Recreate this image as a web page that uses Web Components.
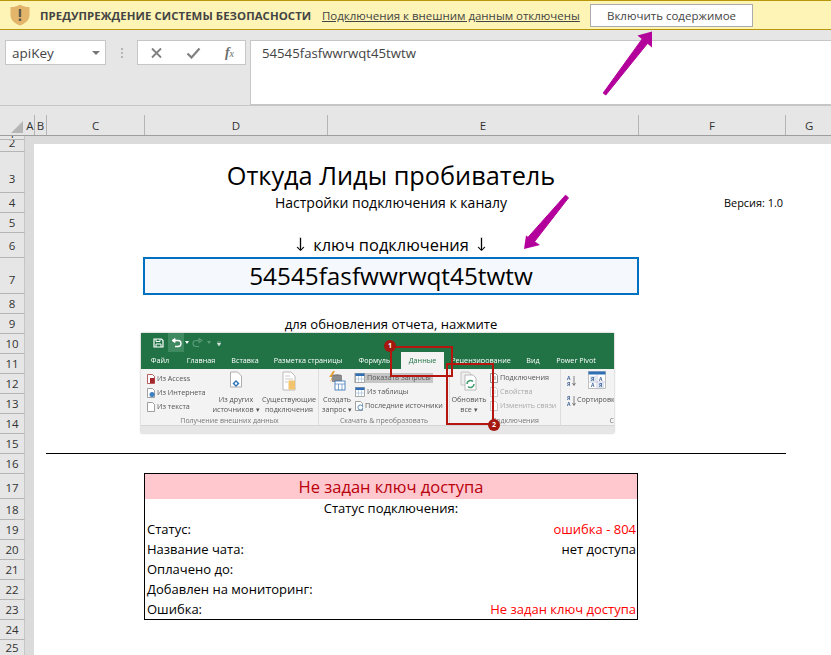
<!DOCTYPE html>
<html lang="ru">
<head>
<meta charset="utf-8">
<title>Откуда Лиды пробиватель</title>
<style>
html,body{margin:0;padding:0;background:#fff;overflow:hidden}
body{font-family:"Open Sans","Noto Sans",sans-serif}
.arr{font-family:"DejaVu Sans",sans-serif;font-size:18.500px;-webkit-text-stroke:.35px #fff;opacity:.99;display:inline-block}
</style>
</head>
<body>
<excel-app>
  <warning-bar></warning-bar>
  <formula-bar name="apiKey" value="54545fasfwwrwqt45twtw"></formula-bar>
  <column-headers></column-headers>
  <sheet-view>
    <sheet-cell style="grid-column:5/7;grid-row:4;font-size:25.300px;padding-top:6px" align="center">Откуда Лиды пробиватель</sheet-cell>
    <sheet-cell style="grid-column:5/7;grid-row:5;font-size:14px" align="center">Настройки подключения к каналу</sheet-cell>
    <sheet-cell style="grid-column:7/8;grid-row:5;font-size:10.900px;padding-right:3px" align="right">Версия: 1.0</sheet-cell>
    <sheet-cell style="grid-column:5/7;grid-row:7;font-size:16.400px;gap:5px" align="center"><span class="arr">↓</span><span>ключ подключения</span><span class="arr">↓</span></sheet-cell>
    <sheet-cell style="grid-column:5/7;grid-row:8;font-size:24.300px;background:#f5f8fc;border:2px solid #0070c0;margin:-1px -1px -1px -1px" align="center">54545fasfwwrwqt45twtw</sheet-cell>
    <sheet-cell style="grid-column:5/7;grid-row:10;font-size:13.050px;padding-top:2px" align="center">для обновления отчета, нажмите</sheet-cell>
    <ribbon-picture style="grid-column:5/7;grid-row:11/16"></ribbon-picture>
    <sheet-cell style="grid-column:4/8;grid-row:16;border-bottom:1px solid #000;margin-left:-1px"></sheet-cell>
    <status-table style="grid-column:5/7;grid-row:18/25"></status-table>
  </sheet-view>
</excel-app>

<script>
function def(name, css, html){
  customElements.define(name, class extends HTMLElement{
    constructor(){
      super();
      const r=this.attachShadow({mode:'open'});
      r.innerHTML='<style>'+css+'</style>'+(typeof html==='function'?html(this):html);
    }
  });
}

def('excel-app',`:host{display:flex;flex-direction:column;width:831px;height:655px;overflow:hidden;color:#000;position:relative}`,`<slot></slot>`);

def('warning-bar',`
:host{display:flex;align-items:center;height:28px;flex:none;background:#fdf4b5;border-top:1px solid #b8960c;border-bottom:1px solid #b8960c;color:#444;font-size:11.3px;white-space:nowrap}
svg{margin-left:10px;flex:none}
b{margin-left:10px;font-weight:700;width:272px;letter-spacing:.06px;font-size:11.4px}
u{margin-left:10px;width:268px;font-size:11.5px;letter-spacing:-.02px}
button{width:163px;height:23px;box-sizing:border-box;background:#fff;border:1px solid #ababab;font:inherit;font-size:11.5px;color:#444;padding:0}
`,`<svg width="20" height="22" viewBox="0 0 20 22"><path d="M10 .5C7 2.5 4 3 .5 3v8c0 5 4 8.500 9.500 10.500C15.500 19.500 19.500 16 19.500 11V3C16 3 13 2.500 10 .5z" fill="#e2b56b"/><rect x="8.800" y="5" width="2.400" height="8" fill="#5d5a4d"/><rect x="8.800" y="14.500" width="2.400" height="2.500" fill="#5d5a4d"/></svg><b>ПРЕДУПРЕЖДЕНИЕ СИСТЕМЫ БЕЗОПАСНОСТИ</b><u>Подключения к внешним данным отключены</u><button>Включить содержимое</button>
<svg style="position:absolute;left:0;top:0;margin:0;overflow:visible;pointer-events:none" width="831" height="100"><path d="M603.200 93L642.200 38.900L647.800 43.100L605.800 95z" fill="#b3009b" stroke="#b3009b" stroke-linejoin="round"/><path d="M652 31.500L637.500 35.500L652 47.500z" fill="#b3009b"/></svg>`);

def('formula-bar',`
:host{display:flex;align-items:flex-start;height:76px;flex:none;background:#e6e6e6;box-sizing:border-box;padding:10px 0 0 5px;border-bottom:1px solid #c6c6c6;font-size:13.500px;color:#444;white-space:nowrap}
.box{background:#fff;border:1px solid #c6c6c6;box-sizing:border-box}
.name{width:101px;height:25px;display:flex;align-items:center;padding:0 5px 0 6px;justify-content:space-between}
.car{width:0;height:0;border:4px solid transparent;border-top:4px solid #777;border-bottom:0}
.dots{width:31px;display:flex;flex-direction:column;align-items:center;gap:2px;padding-top:8px;box-sizing:border-box}
.dots i{width:2px;height:2px;background:#b5b5b5}
.btns{width:109px;height:25px;display:flex;align-items:center;justify-content:space-between;padding:0 11px 0 12px}
.fx{font:italic 700 14px "Liberation Serif",serif;color:#6e6e6e}
.fx small{font-size:10px;font-weight:400}
.input{margin-left:4px;flex:1;height:65px;border-right:0;padding:3px 0 0 11px;line-height:18px;font-size:13.200px}
`,el=>`<div class="box name"><span>${el.getAttribute('name')}</span><i class="car"></i></div><div class="dots"><i></i><i></i><i></i></div>
<div class="box btns"><svg width="13" height="12" viewBox="0 0 13 12"><path d="M2 1.500l9 9M11 1.500l-9 9" stroke="#808080" stroke-width="1.800" fill="none"/></svg><svg width="15" height="12" viewBox="0 0 15 12"><path d="M1.500 6.500L5.500 10.500L13.500 1.500" stroke="#808080" stroke-width="2.200" fill="none"/></svg><span class="fx">f<small>x</small></span></div>
<div class="box input">${el.getAttribute('value')}</div>`);

def('column-headers',`
:host{display:grid;grid-template-columns:26px 9px 12px 98px 183px 311px 147px 1fr;height:30px;flex:none;background:#e6e6e6;box-sizing:border-box;border-bottom:1px solid #9e9e9e;padding-top:9px;font-size:11.500px;color:#333}
div{display:flex;align-items:center;justify-content:center;border-right:1px solid #b5b5b5;box-sizing:border-box;overflow:hidden}
div:last-child{border:0;justify-content:flex-start;padding-left:19px}
.c{border:0;align-items:flex-end;justify-content:flex-end;padding:0 3px 2px 0;position:relative}
`,`<div class="c"><svg width="12" height="12" viewBox="0 0 12 12"><path d="M12 0V12H0z" fill="#b5b5b5"/></svg></div><div>A</div><div>B</div><div>C</div><div>D</div><div>E</div><div>F</div><div>G</div>`);

/* height, label, label offset (padding-top) */
const ROWS=[[4,'1',0],[4,'',0],[8,'',0],[41,'3',14],[20,'4',1],[20,'5',1],[25,'6',1],[36,'7',8],[20,'8',1],[20,'9',1],[20,'10',1],[20,'11',1],[20,'12',1],[20,'13',1],[20,'14',1],[20,'15',1],[20,'16',1],[25,'17',3],[21,'18',1],[20,'19',1],[20,'20',1],[20,'21',1],[20,'22',1],[20,'23',1],[20,'24',1],[16,'25',1]];

def('sheet-view',`
:host{display:grid;flex:none;grid-template-columns:25px 9px 13px 97px 183px 311px 148px 45px;grid-template-rows:${ROWS.map(r=>r[0]+'px').join(' ')};background:#fff;position:relative}
.rh{grid-column:1;background:#e6e6e6;border-bottom:1px solid #b5b5b5;border-right:1px solid #c6c6c6;box-sizing:border-box;font-size:11.500px;color:#333;display:flex;align-items:center;justify-content:center;overflow:hidden;line-height:1}
.rh.one{align-items:flex-end}
.rh.two{align-items:flex-start}
.rh.two span{margin-top:-3px}
.band{background:#dbdbdb}
svg{position:absolute;left:0;top:-136px;pointer-events:none;z-index:3;overflow:visible}
`,`${ROWS.map((r,i)=>r[1]?`<div class="rh${i==0?' one':''}" style="grid-row:${i+1};padding-top:${r[2]}px"><span>${r[1]}</span></div>`:'').join('')}
<div class="rh two" style="grid-row:2/4"><span>2</span></div>
<div class="band" style="grid-column:2;grid-row:1/${ROWS.length+1}"></div>
<div class="band" style="grid-column:3/9;grid-row:1/3"></div>
<slot></slot>
<svg width="831" height="655"><path d="M568.500 197.800L533 243.600L527 238.400L565.500 195.200z" fill="#b3009b" stroke="#b3009b" stroke-linejoin="round"/><path d="M524 249L526 235.500L540 245z" fill="#b3009b"/></svg>`);

def('sheet-cell',`
:host{display:flex;align-items:center;box-sizing:border-box;white-space:nowrap;min-width:0;color:#000;line-height:1}
:host([align=center]){justify-content:center}
:host([align=right]){justify-content:flex-end}
`,`<slot></slot>`);

def('status-table',`
:host{display:grid;grid-template-rows:25px 20px repeat(5,20px);border:1px solid #000;box-sizing:border-box;font-size:13px;color:#000;margin:-1px 0 0;height:147px;white-space:nowrap;line-height:1}
.h{background:#ffc7ce;color:#b8000c;font-size:16.500px;display:flex;align-items:center;justify-content:center;padding-top:1px;box-sizing:border-box}
.s{display:flex;align-items:center;justify-content:center;padding-bottom:1px}
.r{display:flex;align-items:center;justify-content:space-between;padding:0 1px 0 2px}
.red{color:#f00}
`,`<div class="h">Не задан ключ доступа</div><div class="s">Статус подключения:</div>
<div class="r"><span>Статус:</span><span class="red">ошибка - 804</span></div>
<div class="r"><span>Название чата:</span><span>нет доступа</span></div>
<div class="r"><span>Оплачено до:</span></div>
<div class="r"><span>Добавлен на мониторинг:</span></div>
<div class="r"><span>Ошибка:</span><span class="red">Не задан ключ доступа</span></div>`);

const ic={
 doc:(c='#888',x='')=>`<svg width="8" height="10" viewBox="0 0 8 10"><path d="M.5.500h5l2 2v7h-7z" fill="#fff" stroke="${c}" stroke-width=".8"/>${x}</svg>`,
 tbl:(c='#2f6fb5')=>`<svg width="10" height="10" viewBox="0 0 10 10"><rect x=".5" y=".5" width="9" height="9" fill="#fff" stroke="#888" stroke-width=".7"/><rect x=".5" y=".5" width="9" height="2.500" fill="${c}"/><path d="M3.500 3v6.500M6.500 3v6.500M.5 6h9" stroke="#9cb8d6" stroke-width=".6"/></svg>`
};
function small(icon,t,cls=''){return `<div class="sm ${cls}">${icon}<span>${t}</span></div>`}
function large(icon,l1,l2,w,st=''){return `<div class="lg" style="width:${w}px;${st}">${icon}<span>${l1}</span><span>${l2}</span></div>`}

def('ribbon-picture',`
:host{display:block;position:relative;width:473px;height:100px;margin:-1px 0 0 -3px;font-size:7.200px;color:#555;background:#f3f3f3;box-shadow:0 0 2px #aaa;white-space:nowrap;line-height:1}
.pic{width:100%;height:100%;display:flex;flex-direction:column;filter:blur(.3px);overflow:hidden}
.title{height:19px;background:#217346;display:flex;align-items:center;flex:none;position:relative}
.undo{position:absolute;left:27px;top:0;width:16px;height:19px;background:#3f8a61}
.title svg{position:absolute;top:5px}
.tabs{height:17px;background:#217346;display:flex;color:#fff;flex:none}
.tabs div{display:flex;align-items:center;justify-content:center;flex:none}
.tabs .on{background:#f3f3f3;color:#217346}
.body{height:56px;display:flex;flex:none;background:#f3f3f3}
.g{display:flex;flex-direction:column;border-right:1px solid #ddd;box-sizing:border-box;flex:none;height:100%;overflow:hidden}
.gc{height:47px;display:flex;padding-top:2px;flex:none;box-sizing:border-box}
.gl{text-align:center;font-size:7px;color:#777;padding-top:1px}
.col{display:flex;flex-direction:column;gap:4px;padding-top:3px}
.sm{display:flex;align-items:center;gap:2px;height:10px}
.dis{color:#aaa}
.hl{background:#c6c6c6;margin-left:-1px;padding-left:1px;width:78px}
.lg{display:flex;flex-direction:column;align-items:center;flex:none;text-align:center;line-height:10px;font-size:7.200px}
.lg svg{height:20px;margin-bottom:3px;flex:none}
.foot{flex:1;background:#e6e6e6;border-top:1px solid #d5d5d5}
.box{position:absolute;border:2.500px solid #b5170f;box-sizing:border-box}
.dot{position:absolute;width:12px;height:12px;border-radius:50%;background:#a5180f;color:#fff;font:700 7px/12px "Open Sans",sans-serif;text-align:center}
svg text{font:700 5px "Open Sans",sans-serif;fill:#3d5f94}
`,`<div class="pic">
<div class="title"><div class="undo"></div>
<svg style="left:12px" width="11" height="10" viewBox="0 0 11 10"><path d="M1 1h7.500L10 2.500V9H1z" fill="none" stroke="#fff" stroke-width="1.200"/><path d="M3 1v2.500h4V1M3 9V6h5v3" fill="none" stroke="#fff"/></svg>
<svg style="left:30px" width="12" height="10" viewBox="0 0 12 10"><path d="M1 2.500L4 .5v4z" fill="#fff" stroke="#fff"/><path d="M3.500 2.500H7a2.500 2.500 0 0 1 0 6H4" fill="none" stroke="#fff" stroke-width="1.300"/></svg>
<svg style="left:44px;top:8px" width="4" height="3"><path d="M0 0h4L2 3z" fill="#fff"/></svg>
<svg style="left:50px" width="12" height="10" viewBox="0 0 12 10"><path d="M11 2.500L8 .5v4zM8.500 2.500H5a2.500 2.500 0 0 0 0 6h3" fill="none" stroke="#5c9c7a" stroke-width="1.100"/></svg>
<svg style="left:66px;top:8px" width="4" height="3"><path d="M0 0h4L2 3z" fill="#5c9c7a"/></svg>
<svg style="left:76px;top:8px" width="4" height="5"><path d="M0 0h4M0 2h4L2 5z" fill="#cfe3d8" stroke="#cfe3d8" stroke-width=".5"/></svg>
</div>
<div class="tabs"><div style="width:38px">Файл</div><div style="width:44px">Главная</div><div style="width:44px">Вставка</div><div style="width:82px">Разметка страницы</div><div style="width:52px">Формулы</div><div class="on" style="width:43px">Данные</div><div style="width:74px">Рецензирование</div><div style="width:30px">Вид</div><div style="width:56px">Power Pivot</div></div>
<div class="body">
 <div class="g" style="width:178px"><div class="gc"><div class="col" style="width:70px;padding-left:6px;box-sizing:border-box">
  ${small(ic.doc('#a33','<rect x="3" y="4" width="4.500" height="5" fill="#a4262c"/>'),'Из Access')}
  ${small(ic.doc('#888','<circle cx="5" cy="6.500" r="2.500" fill="#3d7fc1"/>'),'Из Интернета')}
  ${small(ic.doc(),'Из текста')}
  </div>
  ${large(`<svg width="16" height="20" viewBox="0 0 16 20"><path d="M2.500 1h7l4 4v11h-11z" fill="#fff" stroke="#999" stroke-width=".8"/><path d="M8 9l3.500 3.500L8 16l-3.500-3.500z" fill="#2e75b6"/><circle cx="8" cy="12.500" r="1.200" fill="#fff"/></svg>`,'Из других','источников ▾',50)}
  ${large(`<svg width="16" height="20" viewBox="0 0 16 20"><path d="M2 1h8l4 4v14H2z" fill="#fff" stroke="#aaa" stroke-width=".8"/><path d="M4 5h5M4 8h8M4 11h3" stroke="#bbb" stroke-width=".8"/><rect x="7.500" y="9.500" width="6.500" height="9" fill="#f2c46d"/></svg>`,'Существующие','подключения',56)}
  </div><div class="gl">Получение внешних данных</div></div>
 <div class="g" style="width:131px"><div class="gc">
  ${large(`<svg width="18" height="20" viewBox="0 0 18 20"><path d="M5 0L1 6h3L2 11l6-7H5l2-4z" fill="#e8a33d"/><ellipse cx="9" cy="5" rx="5" ry="1.800" fill="#7d7d7d"/><rect x="4" y="5" width="10" height="6" fill="#8c8c8c"/><rect x="7" y="10" width="10" height="9" fill="#fff" stroke="#2f6fb5" stroke-width=".8"/><path d="M7 13h10M10.500 13v6M14 13v6" stroke="#2f6fb5" stroke-width=".6"/></svg>`,'Создать','запрос ▾',36)}
  <div class="col" style="padding-top:2px">${small(ic.tbl(),'Показать запросы','hl')}${small(ic.tbl(),'Из таблицы')}${small(ic.doc('#888','<circle cx="5.500" cy="6.500" r="2.500" fill="#fff" stroke="#2e75b6" stroke-width=".8"/>'),'Последние источники')}</div>
  </div><div class="gl">Скачать &amp; преобразовать</div></div>
 <div class="g" style="width:111px"><div class="gc">
  ${large(`<svg width="20" height="20" viewBox="0 0 20 20"><path d="M2 1h8l2 2v11H2z" fill="#eee" stroke="#bbb" stroke-width=".8"/><path d="M6 4h8l3 3v12H6z" fill="#fff" stroke="#aaa" stroke-width=".8"/><path d="M8 13a3.500 3.500 0 0 1 6-2.500M15 13a3.500 3.500 0 0 1-6 2.500" fill="none" stroke="#3e9c6b" stroke-width="1.500"/></svg>`,'Обновить','все ▾',38,'margin:0 2px 0 0')}
  <div class="col" style="padding-top:2px;gap:4px">${small(ic.doc('#777','<path d="M2 4h4M2 6h4" stroke="#777" stroke-width=".7"/>'),'Подключения')}${small(ic.doc('#bbb','<path d="M2 4h4M2 6h4" stroke="#bbb" stroke-width=".7"/>'),'Свойства','dis')}${small(ic.doc('#bbb'),'Изменить связи','dis')}</div>
  </div><div class="gl" style="padding-left:20px">Подключения</div></div>
 <div class="g" style="width:53px;border:0"><div class="gc" style="padding-left:6px">
  <div class="col" style="gap:8px;width:10px;padding-top:4px"><svg width="9" height="12" viewBox="0 0 9 12"><text x="0" y="5">А</text><text x="0" y="11">Я</text><path d="M7 1v9M5.500 8L7 10.500L8.500 8" stroke="#555" stroke-width=".7" fill="none"/></svg><svg width="9" height="12" viewBox="0 0 9 12"><text x="0" y="5">Я</text><text x="0" y="11">А</text><path d="M7 1v9M5.500 8L7 10.500L8.500 8" stroke="#555" stroke-width=".7" fill="none"/></svg></div>
  <div style="display:flex;flex-direction:column;align-items:flex-start;line-height:10px;margin-left:1px"><svg width="18" height="18" viewBox="0 0 18 18" style="margin-left:11px"><rect x=".5" y=".5" width="17" height="17" fill="#fff" stroke="#999" stroke-width=".6"/><rect x=".5" y=".5" width="17" height="3" fill="#2f6fb5"/><path d="M9 4v14M1 11h16" stroke="#aac" stroke-width=".6"/><rect x="2" y="5" width="6" height="5.500" fill="#dbe6f3"/><rect x="10" y="11.500" width="6" height="5.500" fill="#dbe6f3"/><text x="3" y="9.500">Я</text><text x="11" y="9.500">А</text><text x="3" y="16">А</text><text x="11" y="16">Я</text></svg><span style="margin-top:5px">Сортировка</span></div>
  </div><div class="gl" style="text-align:right">С</div></div>
</div>
<div class="foot"></div>
</div>
<div class="box" style="left:249px;top:13px;width:63px;height:31px"></div>
<div class="box" style="left:305px;top:30px;width:48px;height:62px"></div>
<div class="dot" style="left:243px;top:7px">1</div>
<div class="dot" style="left:347px;top:86px">2</div>`);
</script>
</body>
</html>
